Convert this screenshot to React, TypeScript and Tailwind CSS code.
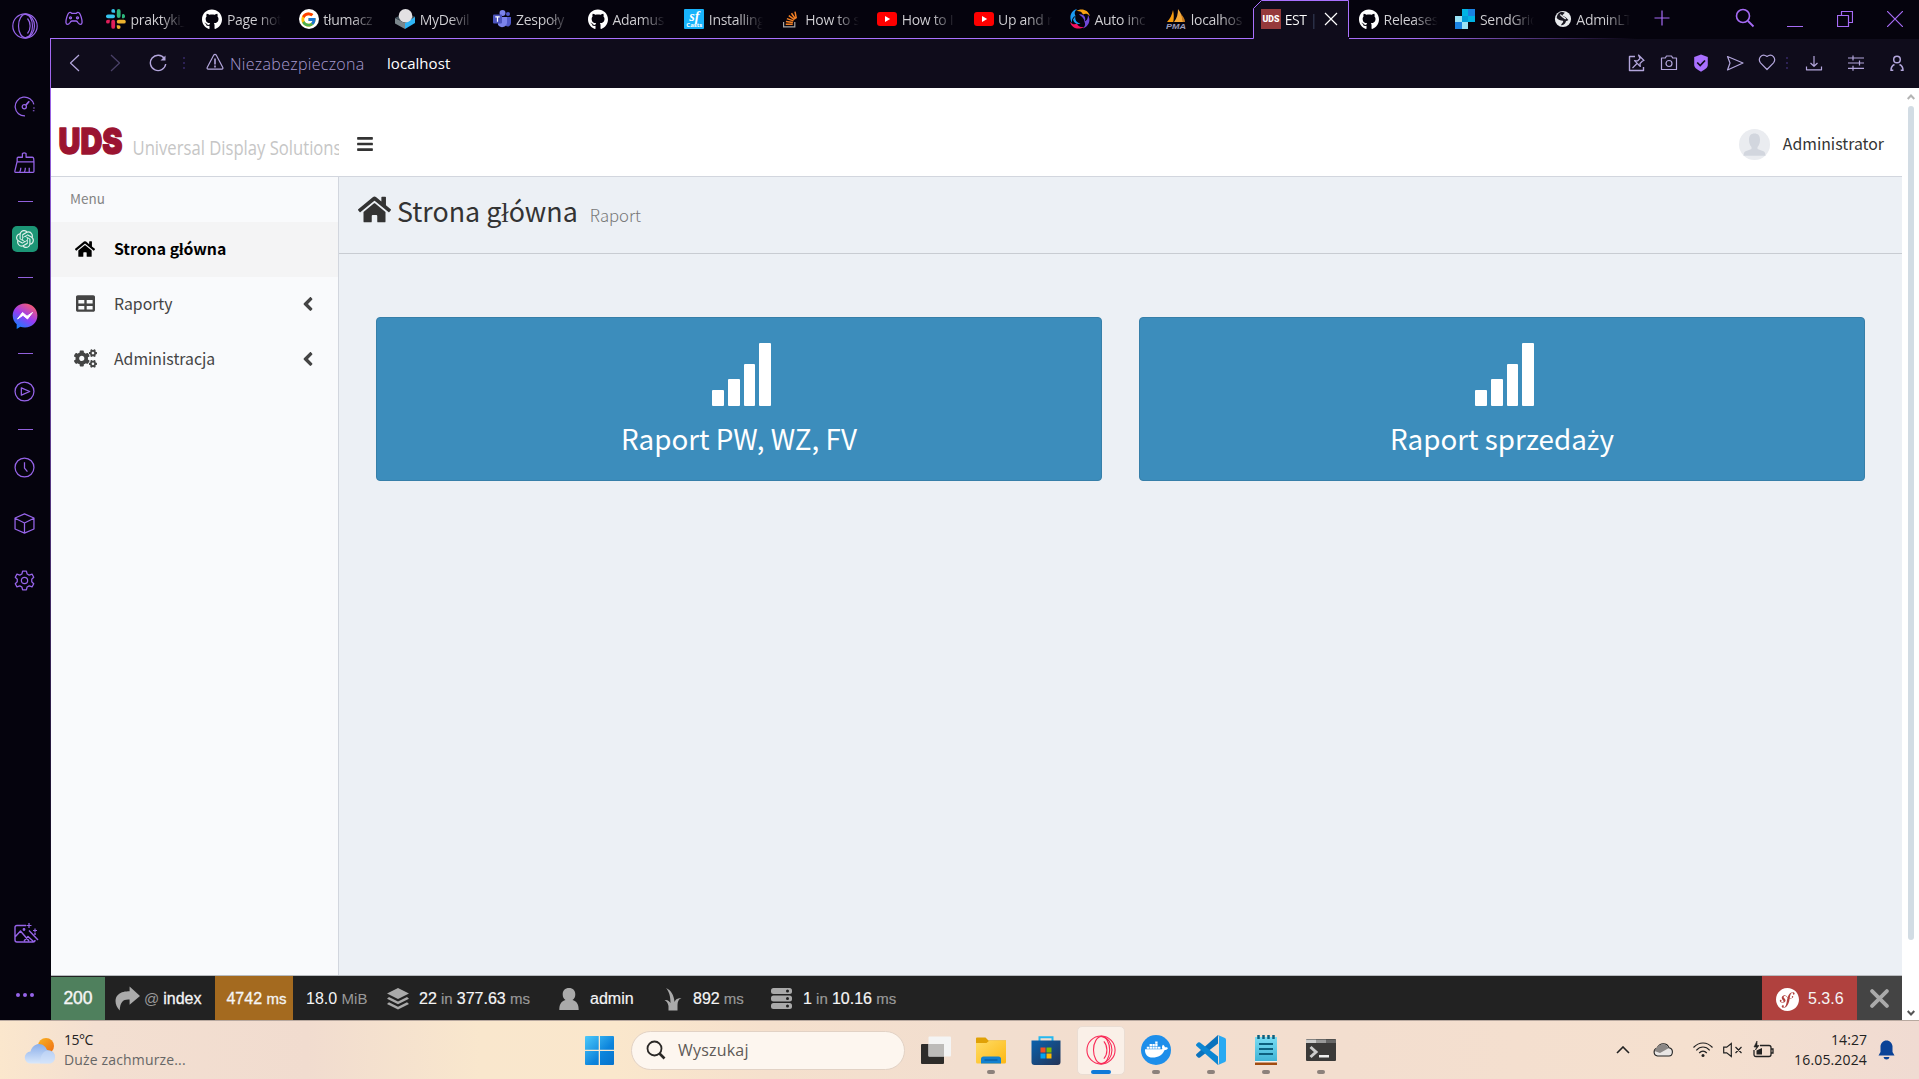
import React from "react";
import { FaHome, FaTable, FaCogs, FaAngleLeft, FaGithub, FaDocker, FaBars } from "react-icons/fa";
import { FcGoogle } from "react-icons/fc";
import { SiOpenai, SiSymfony } from "react-icons/si";

type P = { children?: React.ReactNode; className?: string };

const Stroke = ({ children, className = "", vb = "0 0 20 20" }: P & { vb?: string }) => (
  <svg viewBox={vb} className={className} fill="none" stroke="currentColor" strokeWidth="1.2" strokeLinejoin="round">
    {children}
  </svg>
);

/* ---------- favicons ---------- */
const Slack = () => (
  <svg viewBox="0 0 20 20" className="size-5">
    <g fill="#36c5f0"><rect x="0" y="5.4" width="9" height="3.8" rx="1.9" /><path d="M7.2 0a1.9 1.9 0 0 1 1.9 1.9v1.9H7.2a1.9 1.9 0 0 1 0-3.8z" /></g>
    <g fill="#2eb67d"><rect x="10.8" y="0" width="3.8" height="9" rx="1.9" /><path d="M16 5.4a1.9 1.9 0 1 1 1.9 3.8H16z" /></g>
    <g fill="#ecb22e"><rect x="10.8" y="10.8" width="9" height="3.8" rx="1.9" /><path d="M10.8 16.2h1.9a1.9 1.9 0 1 1-1.9 1.9z" /></g>
    <g fill="#e01e5a"><rect x="5.3" y="10.8" width="3.8" height="9" rx="1.9" /><path d="M3.8 10.8v1.9a1.9 1.9 0 1 1-1.9-1.9z" /></g>
  </svg>
);
const Github = () => <FaGithub className="size-[21px] text-white" />;
const Google = () => (
  <span className="flex size-5 items-center justify-center rounded-full bg-white"><FcGoogle className="size-[17px]" /></span>
);
const Devil = () => (
  <svg viewBox="0 0 20 20" className="size-5">
    <path d="M0 9l10 5v6L0 14.500z" fill="#7b878c" /><path d="M20 7.500L10 14v6l10-6z" fill="#2fb4f5" /><path d="M0 9l10-5 10 4-10 6z" fill="#4a5a63" /><circle cx="10.5" cy="6.800" r="6.800" fill="#e3e1e3" />
  </svg>
);
const Teams = () => (
  <svg viewBox="0 0 20 20" className="size-5">
    <circle cx="16" cy="5" r="2" fill="#5059c9" /><circle cx="10.5" cy="4" r="3" fill="#7b83eb" />
    <path d="M12 8h7v6a3.4 3.4 0 0 1-5 3z" fill="#5059c9" /><path d="M6 8h9v6a5 5 0 0 1-9 2z" fill="#7b83eb" />
    <rect x="1" y="5.500" width="9" height="9" rx="1" fill="#4b53bc" /><path d="M3.300 7.800h4.400M5.500 7.800v5" stroke="#fff" strokeWidth="1.200" />
  </svg>
);
const Casts = () => (
  <span className="flex size-5 flex-col items-center justify-center rounded-[1px] bg-[#18b3fb] text-white">
    <span className="font-['Liberation_Serif'] text-[14px] leading-[11px] font-bold italic">sf</span>
    <span className="font-['Open_Sans'] text-[6px] leading-[6px] font-bold">Casts</span>
  </span>
);
const Stack = () => (
  <svg viewBox="0 0 20 20" className="size-5" fill="none" strokeWidth="1.500">
    <path d="M2.600 13v4.800h11.200V13" stroke="#a7a7a7" strokeWidth="1.200" />
    <path d="M4.700 15.300h7M4.900 12.600l7 .9M5.900 9.600l6.600 2.300M7.800 6.600l5.600 4.100M10.500 4.200l4 5.800M14 2.600l1.300 6.700" stroke="#f48024" />
  </svg>
);
const Tube = () => (
  <svg viewBox="0 0 20 20" className="size-5"><rect y="3" width="20" height="14" rx="3" fill="#f00" /><path d="M8 7l5.200 3L8 13z" fill="#fff" /></svg>
);
const Swirl = () => (
  <svg viewBox="0 0 20 20" className="size-5">
    <path d="M6 2C11-1 18 0 20 7c-3-3-5-2.500-7-1.500C12 2.500 9 1.500 6 2z" fill="#fca311" />
    <path d="M18 6c3 5 2 11-5 14 3-3 2.500-5 1.500-7C17.500 12 18.500 9 18 6z" fill="#6f48d8" transform="translate(-.2 -.4)" />
    <path d="M14 18C9 21 2 20 0 13c3 3 5 2.500 7 1.500 1 3 4 4 7 3.500z" fill="#f5105e" />
    <path d="M2 14C-1 9 0 2 7 0 4 3 4.500 5 5.500 7 2.500 8 1.500 11 2 14z" fill="#1b9bf0" />
    <path d="M9 5.500c4-1 8 3 5.500 7.500 0-3-2-5-5.500-7.500z" fill="#6f48d8" />
    <path d="M5.500 7c-1 3.500 1 7 5 7.500-3 1.500-7-.500-7.500-4z" fill="#1b9bf0" />
  </svg>
);
const Pma = () => (
  <svg viewBox="0 0 20 20" className="size-5">
    <path d="M7 1c1 4 1 8 .3 12H1c3-3 5-7 6-12z" fill="#f89c0e" /><path d="M12 0c3 4 5 8 5 13H8c3-4 4-8 4-13z" fill="#f6a93a" /><path d="M15 5c2 2 4 5 4 8h-2z" fill="#c97c1e" />
    <text x="0" y="19.500" fontSize="8" fontWeight="700" fontStyle="italic" fontFamily="Liberation Sans" fill="#9c9cba" textLength="20" lengthAdjust="spacingAndGlyphs">PMA</text>
  </svg>
);
const Uds = () => (
  <svg viewBox="0 0 20 20" className="size-5"><rect width="20" height="20" fill="#963a3c" /><text x="1.500" y="13.200" fontSize="9" fontWeight="900" fontFamily="Roboto" fill="#fff" textLength="17" lengthAdjust="spacingAndGlyphs">UDS</text></svg>
);
const Send = () => (
  <svg viewBox="0 0 20 20" className="size-5">
    <path d="M7 0h6v7H7z" fill="#00b3e3" /><path d="M13 0h7v13h-7z" fill="#1a82e2" /><path d="M13 7h7v6h-7z" fill="#00b3e3" /><path d="M0 7h7v6H0z" fill="#99e1f4" /><path d="M7 7h6v6H7z" fill="#009dd9" /><path d="M0 13h7v7H0z" fill="#1a82e2" /><path d="M7 13h6v7H7z" fill="#99e1f4" />
  </svg>
);
const Globe = () => (
  <svg viewBox="0 0 20 20" className="ml-[2px] size-5"><circle cx="10" cy="10" r="9" fill="#e8eaed" /><path d="M5 4c2-2 5-2 7-1l-3 3 4 2 3 3c-1 1-2 .5-3 2 0 2-3 4-5 4 0-2 3-3 2-5-3 0-5-1-7-3 0-2 1-4 2-5z" fill="#1a1822" /><path d="M7 5c1 2 4 3 6 5" stroke="#e8eaed" strokeWidth="1.500" fill="none" /></svg>
);

const tabs: { icon: React.FC; text: string; active?: boolean }[] = [
  { icon: Slack, text: "praktyki_" },
  { icon: Github, text: "Page not" },
  { icon: Google, text: "tłumacz" },
  { icon: Devil, text: "MyDevil" },
  { icon: Teams, text: "Zespoły" },
  { icon: Github, text: "Adamus" },
  { icon: Casts, text: "Installing" },
  { icon: Stack, text: "How to s" },
  { icon: Tube, text: "How to I" },
  { icon: Tube, text: "Up and r" },
  { icon: Swirl, text: "Auto inc" },
  { icon: Pma, text: "localhos" },
  { icon: Uds, text: "EST |", active: true },
  { icon: Github, text: "Releases" },
  { icon: Send, text: "SendGrid" },
  { icon: Globe, text: "AdminLT" },
];

const OperaMark = ({ className = "", sw = "1.200" }: { className?: string; sw?: string }) => (
  <svg viewBox="0 0 26 26" className={className} fill="none" stroke="currentColor" strokeWidth={sw}>
    <circle cx="13" cy="13" r="12.200" /><ellipse cx="13.500" cy="13" rx="7" ry="11.800" /><path d="M13 1.200c6 .8 9.500 6 9.500 11.800s-3.500 11-9.500 11.800" /><path d="M15.500 5.500c3.500 4 3.500 11 0 15" />
  </svg>
);

const TabStrip = () => (
  <div className="relative flex h-[39px] items-start">
    <svg className="absolute inset-0 h-[39px] w-[1868px]" viewBox="0 0 1868 39" fill="none">
      <defs><linearGradient id="fade" x1="1340" x2="1585" y1="0" y2="0" gradientUnits="userSpaceOnUse"><stop offset="0.100" stopColor="#a66bf5" /><stop offset="1" stopColor="#a66bf5" stopOpacity="0" /></linearGradient></defs>
      <path d="M1202.500 39V8.500l8-8h87V37l1 2z" fill="#0f0c1b" />
      <path d="M0 38.500h1202.500V8.500l8-8h87V37" stroke="#a970ff" />
      <path d="M1298 38h300v1h-300z" fill="url(#fade)" />
    </svg>
    <div className="relative flex w-[50px] pt-[11px] pl-[14px] text-[#9d66f0]">
      <svg viewBox="0 0 18 16" className="h-4 w-[18px]" fill="none" stroke="currentColor" strokeWidth="1.300"><path d="M4 1.700c1-.6 2.200 0 2.700.6h4.600c.5-.6 1.700-1.200 2.700-.6 1.400.8 3.300 7 3 10-.2 2.300-2.600 2-3.700.3-.8-1.300-1.300-2-2.200-2H6.900c-.9 0-1.400.7-2.200 2C3.600 13.700 1.200 14 1 11.700c-.3-3 1.600-9.200 3-10z" /><circle cx="5.500" cy="6.800" r="1" /><circle cx="12.500" cy="6.800" r="1" /></svg>
    </div>
    <div className="relative flex">
      {tabs.map((t, i) => (
        <div key={i} className={t.active ? "flex h-[38px] w-[96.4px] shrink-0 items-center gap-[4px] pl-[3px]" : "flex h-[38px] w-[96.4px] shrink-0 items-center gap-[4.500px] pl-[5px]"}>
          <span className="flex size-5 shrink-0 items-center justify-center">{<t.icon />}</span>
          <span className={t.active
            ? "w-[31px] overflow-hidden bg-linear-to-r from-white from-75% to-[#3a4560] to-80% bg-clip-text font-['Open_Sans'] text-[14px] tracking-[-0.400px] whitespace-nowrap text-transparent"
            : "w-[54px] overflow-hidden bg-linear-to-r from-[#d3d2d6] from-55% to-transparent bg-clip-text font-['Open_Sans'] text-[14px] tracking-[-0.300px] whitespace-nowrap text-transparent"}>{t.text}</span>
          {t.active && <Stroke vb="0 0 14 14" className="ml-[4px] size-[14px] text-white"><path d="M1 1l12 12M13 1L1 13" /></Stroke>}
        </div>
      ))}
    </div>
    <div className="relative flex h-[38px] flex-1 items-center text-[#a66bf5]">
      <Stroke vb="0 0 16 16" className="ml-[11px] size-4 -translate-y-px"><path d="M8 .5v15M.5 8h15" /></Stroke>
      <Stroke vb="0 0 20 20" className="ml-[65px] size-5 -translate-y-px"><circle cx="8" cy="8" r="6.500" strokeWidth="1.600" /><path d="M13 13l5.500 5.500" strokeWidth="1.800" /></Stroke>
      <span className="mt-[15px] ml-[32px] h-px w-4 bg-current" />
      <Stroke vb="0 0 16 16" className="ml-[34px] size-4"><path d="M.5 4.500h11v11H.5zM4.500 4V.5h11v11H12" /></Stroke>
      <Stroke vb="0 0 16 16" className="ml-[34px] size-4"><path d="M0 0l16 16M16 0L0 16" /></Stroke>
    </div>
  </div>
);

const Dots = ({ className = "" }: P) => (
  <span className={`flex flex-col gap-[3px] ${className}`}>
    <i className="size-[2px] bg-[#2c2154]" /><i className="size-[2px] bg-[#2c2154]" /><i className="size-[2px] bg-[#2c2154]" />
  </span>
);

const Toolbar = () => (
  <div className="flex h-[49px] items-center bg-[#0f0c1b] pb-[2px] text-[#b3a6dc]">
    <Stroke vb="0 0 10 18" className="ml-[18px] h-[18px] w-[11px]"><path d="M9.500 1L1 9l8.500 8" /></Stroke>
    <Stroke vb="0 0 10 18" className="ml-[30px] h-[18px] w-[11px] text-[#4a4168]"><path d="M.5 1L9 9l-8.500 8" /></Stroke>
    <Stroke vb="0 0 18 18" className="ml-[28px] size-[18px]"><path d="M15.400 4.500A7.700 7.700 0 1 0 16.700 10" strokeWidth="1.400" /><path d="M16.500 1.500v5h-5z" fill="currentColor" stroke="none" /></Stroke>
    <Dots className="ml-[16px]" />
    <Stroke vb="0 0 18 18" className="ml-[21px] size-[18px] -translate-y-px"><path d="M7.800 2L1.200 14.500q-.5 1.500 1 1.700h13.600q1.500-.2 1-1.700L10.200 2Q9 .8 7.800 2z" /><path d="M9 5.500v6M9 12.500v2" strokeWidth="1.600" /></Stroke>
    <span className="mt-[3px] ml-[6px] w-[157px] font-['Open_Sans'] text-[16px] font-light tracking-[0.300px] text-[#a79bd0]">Niezabezpieczona</span>
    <span className="mt-px flex-1 font-['Open_Sans'] text-[15px] tracking-[0.050px] text-white">localhost</span>
    <div className="flex items-center">
      <Stroke vb="0 0 18 18" className="size-[18px]"><path d="M7 2.500H1.500v14h14V13" strokeWidth="1.400" /><path d="M10.500 1l5.500 5.500-1.500.5-2.500 2.500.3 3-5.800-5.800 3 .3L12 4.500zM9 9.500l-4.500 4.500" /></Stroke>
      <Stroke vb="0 0 18 18" className="ml-[14px] size-[18px]"><path d="M1.500 4h3.800l1.200-2h5l1.200 2h3.800v11.500h-15z" /><circle cx="9" cy="9.500" r="3" /></Stroke>
      <svg viewBox="0 0 16 18" className="ml-[15px] h-[18px] w-4"><path d="M8 .5l6.800 2.500v8c0 3-3.600 5-6.800 6.700C4.800 16 1.200 14 1.200 11V3z" fill="#a970ff" /><path d="M4.200 8.500l3 3L12 6.500" stroke="#0f0c1b" strokeWidth="1.700" fill="none" /></svg>
      <Stroke vb="0 0 18 18" className="ml-[17px] size-[18px]"><path d="M1.500 2.500L17 9 1.500 16 4 9z" /></Stroke>
      <Stroke vb="0 0 18 18" className="ml-[14px] size-[18px] -translate-y-px"><path d="M9 16.500L2.500 9.800C-.5 6 3.500-.5 9 3.500c5.500-4 9.500 2.500 6.500 6.300z" /></Stroke>
      <Dots className="ml-[10px]" />
      <Stroke vb="0 0 18 18" className="ml-[17px] size-[18px]"><path d="M9 2v10M5.500 9L9 12.300 12.500 9M1.500 12.500v3.300h15v-3.300" /></Stroke>
      <Stroke vb="0 0 18 18" className="ml-[24px] size-[18px]"><path d="M1 4h16M1 9h16M1 14.300h16M6 1.500v5M12.500 6.500v5M6 11.800v5" /></Stroke>
      <Stroke vb="0 0 18 18" className="mr-[13px] ml-[23px] size-[18px]"><circle cx="9" cy="5.500" r="3.300" strokeWidth="1.500" /><path d="M3 16.500c0-3 1-5 3.500-6M15 16.500c0-3-1-5-3.500-6M2.300 16.300h3M12.700 16.300h3" strokeWidth="1.500" /></Stroke>
    </div>
  </div>
);

const Dash = ({ className = "" }: P) => <span className={`ml-px h-px w-[15px] shrink-0 bg-[#9260dc] ${className}`} />;
const Slot = ({ children, className = "" }: P) => <div className={`flex shrink-0 items-center justify-center ${className}`}>{children}</div>;

const OperaSidebar = () => (
  <div className="flex h-[1020px] w-[50px] shrink-0 flex-col items-center bg-[#05030d] pr-px text-[#9664e8]">
    <Slot className="h-[51px] pl-[1px]"><OperaMark className="size-[26px]" /></Slot>
    <Slot className="mt-[40px] h-[30px]"><Stroke className="size-[21px]"><path d="M10.500 19A9 9 0 1 1 18.900 8" /><path d="M19 11v1M18.700 13.500v1" strokeWidth="1.500" /><circle cx="9.800" cy="10.200" r="2" /><path d="M11.300 8.700L14.500 5" strokeWidth="1.600" /></Stroke></Slot>
    <Slot className="mt-[26px] h-[30px]"><Stroke className="size-[21px]"><path d="M8 5V1.500q1.700-1.300 3.500 0V5h6q1 0 1.200 1l.3 3v9.500q0 .8-.8.800H1.500q-1 0-.7-1L3 9V6q0-1 1-1zM3 9.500h16M5.500 19q1-2 1-4M10 19q.8-1.500.8-4M14.500 19v-4" /></Stroke></Slot>
    <Dash className="mt-[24px]" />
    <Slot className="mt-[24px] h-[26px]"><span className="flex size-[26px] items-center justify-center rounded-[5px] bg-[#1c9575]"><SiOpenai className="size-[18px] text-[#e0efea]" /></span></Slot>
    <Dash className="mt-[25px]" />
    <Slot className="mt-[25px] h-[26px] pl-px">
      <svg viewBox="0 0 26 26" className="size-[26px]"><defs><linearGradient id="msg" x1="0.200" y1="1" x2="0.800" y2="0"><stop offset="0" stopColor="#0a84ff" /><stop offset="0.500" stopColor="#9a3bf2" /><stop offset="1" stopColor="#ff5f66" /></linearGradient></defs><path d="M13 .5C6 .5.700 5.600.700 12.400c0 3.600 1.500 6.700 4 8.800V26l3.600-2.200c1.500.5 3 .7 4.700.7 7 0 12.400-5.100 12.400-12S20 .5 13 .5z" fill="url(#msg)" /><path d="M5.500 16l5-6.500 4.500 3.700 5.500-3.700-5 6.500-4.500-3.700z" fill="#fff" stroke="#fff" /></svg>
    </Slot>
    <Dash className="mt-[24px]" />
    <Slot className="mt-[22px] h-[30px]"><Stroke className="size-[21px]"><circle cx="10" cy="10" r="9" /><path d="M7 6.500v7l8-3.500z" /></Stroke></Slot>
    <Dash className="mt-[23px]" />
    <Slot className="mt-[22px] h-[30px]"><Stroke className="size-[21px]"><circle cx="10" cy="10" r="9" /><path d="M10 5v5.500l2.800 3.500" /></Stroke></Slot>
    <Slot className="mt-[26px] h-[30px]"><Stroke className="size-[21px]"><path d="M10 .8l9 4v10.400l-9 4-9-4V4.800zM1 5l9 4.500L19 5M10 9.500V19" /></Stroke></Slot>
    <Slot className="mt-[27px] h-[30px]"><Stroke className="size-[21px]"><circle cx="10" cy="10" r="3" /><path d="M8.200 1h3.600l.7 2.800 2 1.100 2.700-1 1.600 3-1.900 1.900v2.400l1.900 1.900-1.600 3-2.700-1-2 1.100-.7 2.800H8.200l-.7-2.800-2-1.100-2.700 1-1.600-3 1.900-1.900V8.800L1.200 6.900l1.600-3 2.700 1 2-1.100z" /></Stroke></Slot>
    <Slot className="mt-[323px] h-[30px] pl-[3px]"><Stroke vb="0 0 25 21" className="h-[21px] w-[25px]"><path d="M12 2.500H3q-2 0-2 2v12.500q0 2 2 2h16q2 0 2-2M21 10v2M1 14l5.500-6 8.500 10M10 18l4-4.500 6 5.500M15 7.500l9 9.500" strokeWidth="1.400" /><path d="M15 0v5M12.500 2.500h5M21 5.500v4M19 7.500h4" /><circle cx="10" cy="6.500" r=".8" fill="currentColor" /></Stroke></Slot>
    <Slot className="mt-[32px] h-[30px] gap-[3px]"><i className="size-1 rounded-full bg-current" /><i className="size-1 rounded-full bg-current" /><i className="size-1 rounded-full bg-current" /></Slot>
  </div>
);

const Header = () => (
  <header className="flex h-[89px] items-center border-b border-[#d2d6de] bg-white">
    <svg viewBox="0 0 288 88" className="h-[88px] w-[288px] shrink-0">
      <text x="7.500" y="66" fontSize="36" fontWeight="900" fontFamily="Inter" fill="#9b1431" stroke="#9b1431" strokeWidth="1.400" strokeLinejoin="round" textLength="64" lengthAdjust="spacingAndGlyphs">UDS</text>
      <text x="81.500" y="67" fontSize="19.500" fontFamily="Open Sans" fill="#c6c6c6" textLength="209" lengthAdjust="spacingAndGlyphs">Universal Display Solutions</text>
    </svg>
    <FaBars className="mt-[23px] ml-[17px] size-[18px] text-[#333]" />
    <span className="flex-1" />
    <span className="mt-[25px] flex size-[31px] items-end justify-center rounded-full bg-[#eaecf0]">
      <svg viewBox="0 0 31 31" className="size-[31px]"><path d="M15.500 4.500c3.500 0 5.500 2 5.500 6.500 0 3-1 5.500-2.500 7v2l6.500 2.500q1.500 1 1.500 4.300h-22q0-3.300 1.500-4.300l6.500-2.500v-2c-1.500-1.500-2.500-4-2.500-7 0-4.500 2-6.500 5.500-6.500z" fill="#d2d6de" /></svg>
    </span>
    <span className="mt-[23px] mr-[18px] ml-[13px] font-['Noto_Sans_CJK_SC'] text-[15.800px] leading-6 text-[#333]">Administrator</span>
  </header>
);

const MenuRow = ({ icon, label, active }: { icon: React.ReactNode; label: string; active?: boolean }) => (
  <a className={active
    ? "flex h-[55px] items-center bg-[#f4f4f5] pb-[2px] font-['Noto_Sans_CJK_SC'] text-[15.800px] font-bold text-black"
    : "flex h-[55px] items-center pb-[2px] font-['Noto_Sans_CJK_SC'] text-[15.800px] text-[#444]"}>
    <span className="ml-[18px] flex w-[32px] justify-center">{icon}</span>
    <span className="ml-[13px] flex-1 leading-6">{label}</span>
    {!active && <FaAngleLeft className="mt-px mr-[19px] size-[22px]" />}
  </a>
);

const ReportButton = ({ label }: { label: React.ReactNode }) => (
  <button className="flex h-[164px] flex-1 flex-col items-center rounded-[4px] border border-[#367fa9] bg-[#3c8dbc] pt-[25px] text-white">
    <span className="flex h-[63px] items-end gap-[4px] pl-[5px]">
      <i className="h-[16px] w-[11.600px] rounded-[1px] bg-white" /><i className="h-[27px] w-[11.600px] rounded-[1px] bg-white" /><i className="h-[42px] w-[11.600px] rounded-[1px] bg-white" /><i className="h-[63px] w-[11.600px] rounded-[1px] bg-white" />
    </span>
    <span className="mt-[12px] font-['Noto_Sans_CJK_SC'] text-[27.800px] leading-[40px]">{label}</span>
  </button>
);

const Page = () => (
  <div className="flex h-[887px] flex-col">
    <Header />
    <div className="flex flex-1">
      <aside className="w-[288px] shrink-0 border-r border-[#d2d6de] bg-[#f9fafc]">
        <div className="h-[45px] pt-[9px] pl-[19px] font-['Noto_Sans_CJK_SC'] text-[13.500px] leading-6 text-[#848484]">Menu</div>
        <MenuRow active icon={<FaHome className="size-5" />} label="Strona główna" />
        <MenuRow icon={<FaTable className="size-[19px]" />} label="Raporty" />
        <MenuRow icon={<FaCogs className="size-[23px]" />} label="Administracja" />
      </aside>
      <main className="flex-1 bg-[#ecf0f5]">
        <div className="flex h-[77px] items-baseline border-b border-[#c8ccd2] pl-[19px] font-['Noto_Sans_CJK_SC'] text-[#333]">
          <FaHome className="size-[33px] translate-y-[4px]" />
          <h1 className="ml-[6px] text-[26.800px] leading-[68px]">Strona główna</h1>
          <small className="ml-[12px] font-['Noto_Sans_CJK_SC_Light','Noto_Sans_CJK_SC'] text-[16.700px] font-light text-[#777]">Raport</small>
        </div>
        <div className="mt-[63px] flex gap-[37px] px-[37px]">
          <ReportButton label="Raport PW, WZ, FV" />
          <ReportButton label={<>Raport sprzeda<span className="font-['Open_Sans'] text-[27px]">ż</span>y</>} />
        </div>
      </main>
    </div>
  </div>
);

const G = ({ children }: P) => <span className="text-[#999]">{children}</span>;

const DebugBar = () => (
  <div className="flex h-[45px] items-stretch border-t border-[#b9bcc0] bg-[#222] font-['Liberation_Sans'] text-[16px] text-[#f5f5f5]">
    <div className="mt-px flex w-[54px] items-center justify-center bg-[#4f805d] text-[17.500px] [-webkit-text-stroke:0.4px]">200</div>
    <div className="flex w-[110px] items-center">
      <svg viewBox="0 0 24 24" className="mt-px ml-[10px] h-[25px] w-[25px]"><path d="M14 .5L24 9.500 14 18v-5C8 12.500 5 15 4.500 23.500 0 19-1 12 3 8.500 6 5.500 10 5 14 5z" fill="#aaa" /></svg>
      <span className="mt-[2px] ml-[4px] text-[15px]"><G>@</G></span><span className="mt-[2px] ml-[4px] [-webkit-text-stroke:0.3px]">index</span>
    </div>
    <div className="flex w-[78px] items-center justify-center bg-[#a46a1f] pt-[2px] pl-[5px] [-webkit-text-stroke:0.3px]"><span>4742 <span className="text-[15px]">ms</span></span></div>
    <div className="flex w-[94px] items-center pt-[2px] pl-[13px]"><span>18.0 <span className="text-[15px]"><G>MiB</G></span></span></div>
    <div className="flex w-[172px] items-center">
      <svg viewBox="0 0 22 24" className="mt-px h-6 w-[22px]"><path d="M11 1l11 5.500L11 12 0 6.500zM2 10l9 4.500L20 10l2 1.700-11 5.500-11-5.500zM2 15.200l9 4.500 9-4.500 2 1.700-11 5.600L0 16.900z" fill="#aaa" /></svg>
      <span className="mt-[2px] ml-[10px] whitespace-pre [-webkit-text-stroke:0.2px]">22<span className="text-[15px]"><G> in </G></span>377.63<span className="text-[15px]"><G> ms</G></span></span>
    </div>
    <div className="flex w-[105px] items-center">
      <svg viewBox="0 0 20 24" className="mt-px h-6 w-5"><path d="M10 1c4 0 6.300 2.500 6.300 6.500 0 2.500-1 4.500-2.800 5.500 4 1 6.200 4 6.200 10H.3c0-6 2.200-9 6.200-10-1.800-1-2.800-3-2.800-5.500C3.700 3.500 6 1 10 1z" fill="#aaa" /></svg>
      <span className="mt-[2px] ml-[11px] [-webkit-text-stroke:0.2px]">admin</span>
    </div>
    <div className="flex w-[107px] items-center">
      <svg viewBox="0 0 18 24" className="mt-px h-6 w-[18px]"><path d="M2 1c5 2 8 7 8.500 14 .5-2 3-4.500 7-4-3 1-4 4-4 7v5.500h-9V19c-.5-3-2-5-4-6 3-.5 5 1 6 3C6.500 10 5.500 5 2 1z" fill="#aaa" /></svg>
      <span className="mt-[2px] ml-[11px] whitespace-pre [-webkit-text-stroke:0.2px]">892<span className="text-[15px]"><G> ms</G></span></span>
    </div>
    <div className="flex flex-1 items-center">
      <svg viewBox="0 0 21 24" className="h-6 w-[21px]"><g fill="#aaa"><rect y="2" width="21" height="6" rx="2.500" /><rect y="9.500" width="21" height="6" rx="2.500" /><rect y="17" width="21" height="6" rx="2.500" /></g><g fill="#222"><circle cx="16.500" cy="5" r="1.500" /><circle cx="16.500" cy="12.500" r="1.500" /><circle cx="16.500" cy="20" r="1.500" /></g></svg>
      <span className="mt-[2px] ml-[11px] whitespace-pre [-webkit-text-stroke:0.2px]">1<span className="text-[15px]"><G> in </G></span>10.16<span className="text-[15px]"><G> ms</G></span></span>
    </div>
    <div className="flex w-[95px] items-center bg-[#b0413e]"><SiSymfony className="ml-[14px] size-[23px] translate-y-px text-white" /><span className="mt-[2px] ml-[9px]">5.3.6</span></div>
    <div className="flex w-[45px] items-center justify-center bg-[#444]"><svg viewBox="0 0 18 18" className="size-[19px]"><path d="M2 2l14 14M16 2L2 16" stroke="#aaa" strokeWidth="3.600" strokeLinecap="round" /></svg></div>
  </div>
);

const TaskItem = ({ children, active, run = true }: P & { active?: boolean; run?: boolean }) => (
  <div className={active
    ? "flex h-[49px] w-[48px] flex-col items-center rounded-[5px] border border-[#eaddd3] bg-[#faf0e8] pt-[8px]"
    : "flex h-[49px] w-[48px] flex-col items-center pt-[9px]"}>
    <div className="flex size-[30px] items-center justify-center">{children}</div>
    {run && <i className={active ? "mt-[5px] h-[4px] w-5 rounded-full bg-[#0f7ad8]" : "mt-[5px] h-[4px] w-2 rounded-full bg-[#8c817b]"} />}
  </div>
);

const Taskbar = () => (
  <div className="flex h-[59px] items-center border-t border-[#b8a9a0] bg-[linear-gradient(90deg,#fbe7cd_0%,#f3dfd1_5%,#f1dccf_16%,#f9e7cd_25%,#fae7cc_32%,#f5e0cd_40%,#f2decf_50%,#f3decf_70%,#f5e0cf_88%,#f0dbd2_100%)] font-['Open_Sans']">
    <svg viewBox="0 0 32 28" className="mt-[2px] ml-[24px] h-[28px] w-8">
      <defs><linearGradient id="sun" x1="0" y1="0" x2="1" y2="1"><stop stopColor="#f9b524" /><stop offset="1" stopColor="#ee6a12" /></linearGradient><linearGradient id="cl" x1="0" y1="0" x2="0" y2="1"><stop stopColor="#8aaeea" /><stop offset="1" stopColor="#d9e8fb" /></linearGradient></defs>
      <circle cx="22" cy="9" r="8" fill="url(#sun)" /><path d="M7 26.500a6 6 0 0 1-.5-12C8 9 12 7 15 7c4 0 7 3 8 6 5 0 8 3 8 7s-3 6.500-6 6.500z" fill="url(#cl)" /><path d="M16 26.500c0-8 3-12 7-13 5 0 8 3 8 7s-3 6-6 6z" fill="#cfe0fa" opacity=".5" />
    </svg>
    <div className="ml-[8px] w-[521px] text-[14px] leading-5"><div className="tracking-[-0.500px] text-[#222]">15°C</div><div className="tracking-[0.150px] text-[#666]">Duże zachmurze...</div></div>
    <svg viewBox="0 0 29 29" className="size-[29px]"><defs><linearGradient id="win" x1="0" y1="0" x2="1" y2="1"><stop stopColor="#4cc9fa" /><stop offset="0.600" stopColor="#0c84dc" /><stop offset="1" stopColor="#0672cb" /></linearGradient></defs><path d="M1 0h12.700v13.700H0V1q0-1 1-1zM15 0h13q1 0 1 1v12.700H15zM0 15h13.700v14H1q-1 0-1-1zM15 15h14v13q0 1-1 1H15z" fill="url(#win)" /></svg>
    <div className="ml-[17px] flex h-[39px] w-[274px] items-center rounded-full border border-[#e2d2c5] bg-[#fdf6ef]">
      <svg viewBox="0 0 20 20" className="ml-[14px] size-5" fill="none" stroke="#2b2826"><circle cx="8.500" cy="8.500" r="7" strokeWidth="1.800" /><path d="M13.500 13.500l5 5" strokeWidth="2.600" /></svg>
      <span className="ml-[12px] text-[16px] tracking-[0.200px] text-[#5f5a57]">Wyszukaj</span>
    </div>
    <div className="ml-[7px] flex gap-[7px]">
      <TaskItem run={false}>
        <svg viewBox="0 0 30 30" className="size-[30px]"><rect x="0" y="9" width="23" height="20" rx="1" fill="#2e2c2a" /><rect x="7.500" y="1.500" width="22.500" height="20" rx="1" fill="#f4f4f4" /><path d="M7.500 9H23v12.500H7.500z" fill="#bdbbb9" /></svg>
      </TaskItem>
      <TaskItem>
        <svg viewBox="0 0 30 30" className="size-[30px]"><defs><linearGradient id="fo" x1="0" y1="0" x2="1" y2="1"><stop stopColor="#ffdc66" /><stop offset="1" stopColor="#fdb813" /></linearGradient></defs><path d="M0 3.500q0-1 1-1h8.500l3 3H30v4H0z" fill="#e0a106" /><path d="M0 8h10.500l3-2.500H30V27q0 1.500-1.500 1.500h-27Q0 28.500 0 27z" fill="url(#fo)" /><path d="M5 28.500V24q0-2.500 2.500-2.500h15Q25 21.500 25 24v4.500z" fill="#1381d0" /><path d="M8.500 25h13" stroke="#0b5a9a" strokeWidth="1.200" /></svg>
      </TaskItem>
      <TaskItem run={false}>
        <svg viewBox="0 0 30 30" className="size-[30px]"><defs><linearGradient id="st" x1="0" y1="0" x2="1" y2="1"><stop stopColor="#0a62ae" /><stop offset="1" stopColor="#243356" /></linearGradient></defs><path d="M8.500 7V2.300h13V7" fill="none" stroke="#26b8ef" strokeWidth="2" /><path d="M.5 5.500h29V27q0 3-3 3h-23q-3 0-3-3z" fill="url(#st)" /><path d="M9.500 12.500h5v5h-5z" fill="#f25022" /><path d="M15.500 12.500h5v5h-5z" fill="#7fba00" /><path d="M9.500 18.500h5v5h-5z" fill="#00a4ef" /><path d="M15.500 18.500h5v5h-5z" fill="#ffb900" /></svg>
      </TaskItem>
      <TaskItem active><OperaMark sw="0.950" className="size-[30px] text-[#f92c58]" /></TaskItem>
      <TaskItem><span className="flex size-[30px] items-center justify-center rounded-full bg-[#1d8eea] text-white"><FaDocker className="size-[23px]" /></span></TaskItem>
      <TaskItem>
        <svg viewBox="0 0 30 30" className="size-[30px]"><path d="M22 0v8.500L4 22.500q-1 .5-2 0L.5 21q-1-1 0-2z" fill="#0a72bd" /><path d="M22 30v-8.500L4 7.500q-1-.5-2 0L.5 9q-1 1 0 2z" fill="#0b86d3" /><path d="M22 0l7 3q1 .5 1 2v20q0 1.500-1 2l-7 3q1-1 1-3V3q0-2-1-3z" fill="#29a9f2" /></svg>
      </TaskItem>
      <TaskItem>
        <svg viewBox="0 0 30 30" className="size-[30px]"><defs><linearGradient id="np" x1="0" y1="0" x2="0" y2="1"><stop stopColor="#7adcf3" /><stop offset="1" stopColor="#40b4d6" /></linearGradient></defs><path d="M4 25h22v5H4z" fill="#a14b0f" /><path d="M4 24h22v3.500H4z" fill="#f6f1ec" /><path d="M4 2h22v24H4z" fill="url(#np)" /><path d="M8 9h14M8 14h14M8 19h14" stroke="#0d607f" strokeWidth="1.800" /><path d="M7.500 0v4M12.500 0v4M17.500 0v4M22.500 0v4" stroke="#0d607f" strokeWidth="2.500" /></svg>
      </TaskItem>
      <TaskItem>
        <svg viewBox="0 0 30 30" className="size-[30px]"><rect y="4" width="30" height="22" rx="1" fill="#3b3a39" /><path d="M0 4.500h10V8H0z" fill="#ccc" /><path d="M10 4.500h10V8H10z" fill="#999" /><path d="M20 4.500h10V8H20z" fill="#666" /><path d="M4.500 12l5.500 5-5.500 5" fill="none" stroke="#ccc" strokeWidth="3" /><path d="M13 20h10v2.500H13z" fill="#eee" /></svg>
      </TaskItem>
    </div>
    <span className="flex-1" />
    <svg viewBox="0 0 14 8" className="h-2 w-[14px]" fill="none" stroke="#222" strokeWidth="1.600"><path d="M1 7l6-6 6 6" /></svg>
    <svg viewBox="0 0 20 14" className="ml-[23px] h-[14px] w-5"><path d="M4.500 13A4 4 0 0 1 4 5.200C5.500 2 8 .8 10.300.8c3 0 5 2 5.700 4 5 1 4 8.200 0 8.200z" fill="#e9e6e4" stroke="#222" strokeWidth="1.100" /><path d="M1.500 8C3 5 6 1 10 1.300c3 0 5 2 5.500 4L7 10z" fill="#8b8785" /></svg>
    <svg viewBox="0 0 20 16" className="ml-[20px] h-4 w-5" fill="none" stroke="#222" strokeWidth="1.200"><path d="M.5 5.500c5.500-6 13.500-6 19 0M3.300 8.300c4-4.400 9.400-4.400 13.400 0M6.200 11c2.400-2.500 5.200-2.500 7.600 0" /><circle cx="10" cy="13.500" r="1.500" fill="#222" stroke="none" /></svg>
    <svg viewBox="0 0 20 16" className="ml-[10px] h-4 w-5" fill="none" stroke="#222" strokeWidth="1.200"><path d="M.7 5.200h3L8.300 1.500v13L3.700 10.800h-3zM12.500 5l6 6M18.500 5l-6 6" /></svg>
    <svg viewBox="0 0 21 18" className="ml-[10px] h-[18px] w-[21px]" fill="none" stroke="#222" strokeWidth="1.300"><path d="M7 4.500h9q2 0 2 2v7q0 2-2 2H3q-2 0-2-2V9M18.500 8h1.500v4h-1.500" /><path d="M4 0L1 6h2.500L2.500 9 6 4.500H4z" fill="#222" strokeWidth=".6" /><path d="M3.500 13.500v-4L9 7v6.500z" fill="#222" stroke="none" /></svg>
    <div className="ml-[10px] w-[83px] text-right text-[14px] leading-5 text-[#222]"><div className="tracking-[0.050px]">14:27</div><div className="tracking-[0.150px]">16.05.2024</div></div>
    <svg viewBox="0 0 17 20" className="mr-[24px] ml-[11px] h-5 w-[17px]"><path d="M8.500.5C12 .5 14 3 14.500 6v6l2 3.500H.5l2-3.500V6C3 3 5 .5 8.500.5zM5.500 17h6q-.5 2.500-3 2.500t-3-2.500z" fill="#0a4297" /></svg>
  </div>
);

const Scrollbar = () => (
  <div className="flex w-[17px] shrink-0 flex-col items-center bg-white pl-[1px]">
    <svg viewBox="0 0 8 6" className="mt-[6px] h-[6px] w-2" fill="none" stroke="#b3b3b3" strokeWidth="2"><path d="M.7 5L4 1.500 7.300 5" /></svg>
    <span className="mt-[6px] h-[834px] w-[6px] rounded-full bg-[#d2dce4]" />
    <span className="flex-1" />
    <svg viewBox="0 0 8 6" className="mb-[4px] h-[6px] w-2" fill="none" stroke="#555" strokeWidth="2"><path d="M.7 1L4 4.500 7.300 1" /></svg>
  </div>
);

export default function App() {
  return (
    <div className="flex h-[1079px] w-[1919px] flex-col overflow-hidden bg-[#05030d]">
      <div className="flex h-[1020px]">
        <OperaSidebar />
        <div className="mt-[38px] h-[900px] w-px shrink-0 bg-linear-to-b from-[#a66bf5] to-transparent" />
        <div className="flex flex-1 flex-col">
          <TabStrip />
          <Toolbar />
          <div className="flex h-[932px]">
            <div className="flex w-[1851px] flex-col"><Page /><DebugBar /></div>
            <Scrollbar />
          </div>
        </div>
      </div>
      <Taskbar />
    </div>
  );
}
